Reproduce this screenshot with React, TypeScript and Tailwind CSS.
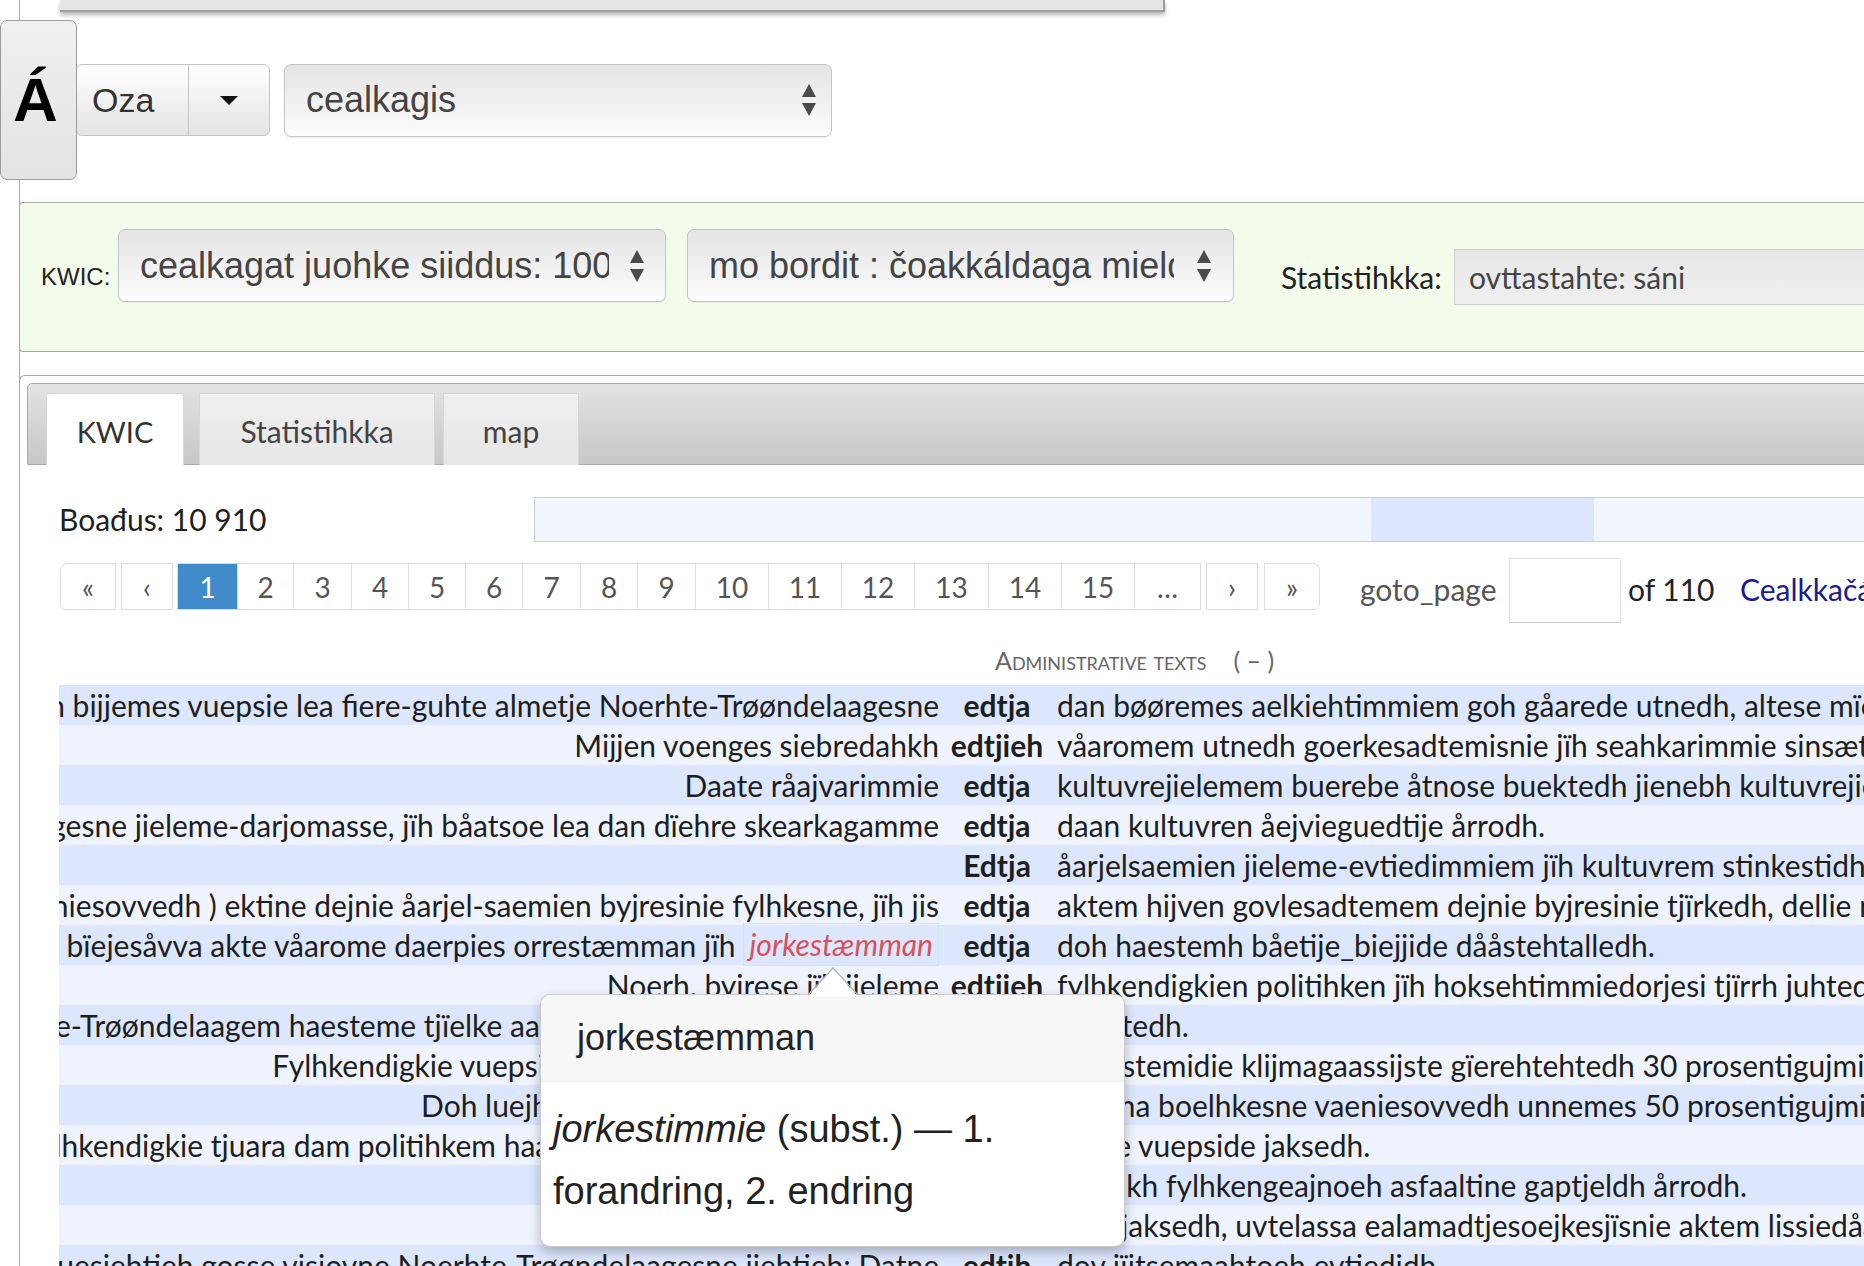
import React from "react";

type Row = { l: string; hl?: string; k: string; r: string };

const rows: Row[] = [
  {
    l: "Daate lea dan gaavhtan bijjemes vuepsie lea fiere-guhte almetje Noerhte-Trøøndelaagesne",
    k: "edtja",
    r: "dan bøøremes aelkiehtimmiem goh gåarede utnedh, altese mïelen mietie jïh eatnemen mietie",
  },
  {
    l: "Mijjen voenges siebredahkh",
    k: "edtjieh",
    r: "våaromem utnedh goerkesadtemisnie jïh seahkarimmie sinsætnan gaskem",
  },
  {
    l: "Daate råajvarimmie",
    k: "edtja",
    r: "kultuvrejielemem buerebe åtnose buektedh jienebh kultuvrejielemi mietie",
  },
  {
    l: "Noerhte-Trøøndelaagesne jieleme-darjomasse, jïh båatsoe lea dan dïehre skearkagamme",
    k: "edtja",
    r: "daan kultuvren åejvieguedtije årrodh.",
  },
  {
    l: "",
    k: "Edtja",
    r: "åarjelsaemien jieleme-evtiedimmiem jïh kultuvrem stinkestidh jïh eevtjedh",
  },
  {
    l: "Gosse mijjieh daejtie vaeniesovvedh ) ektine dejnie åarjel-saemien byjresinie fylhkesne, jïh jis",
    k: "edtja",
    r: "aktem hijven govlesadtemem dejnie byjresinie tjïrkedh, dellie mijjieh",
  },
  {
    l: "Daate sjïehtesjimmie bïejesåvva akte våarome daerpies orrestæmman jïh",
    hl: "jorkestæmman",
    k: "edtja",
    r: "doh haestemh båetije_biejjide dååstehtalledh.",
  },
  {
    l: "Noerh. byjrese jïh jieleme",
    k: "edtjieh",
    r: "fylhkendigkien politihken jïh hoksehtimmiedorjesi tjïrrh juhtedh.",
  },
  {
    l: "Fylhkendigkie sïjhtie Noerhte-Trøøndelaagem haesteme tjïelke aamhtesinie vuesiehtidh gåarede",
    k: "edtja",
    r: "buektedh.",
  },
  {
    l: "Fylhkendigkie vuepsiem bïejeme 2030 jaepien gïen",
    k: "edtja",
    r: "byjrestemidie klijmagaassijste gïerehtehtedh 30 prosentigujmie 1990 daltesistie",
  },
  {
    l: "Doh luejhtemh fylhkesne båetije jaepiej",
    k: "edtjieh",
    r: "daajma boelhkesne vaeniesovvedh unnemes 50 prosentigujmie",
  },
  {
    l: "Daate vuesehte Fylhkendigkie tjuara dam politihkem haarjanidh juktie fylhkesne jïh aaj",
    k: "edtja",
    r: "dejtie vuepside jaksedh.",
  },
  { l: "Gaajhkh", k: "edtjieh", r: "gaajhkh fylhkengeajnoeh asfaaltine gaptjeldh årrodh." },
  {
    l: "Mijjieh",
    k: "edtjebe",
    r: "dam jaksedh, uvtelassa ealamadtjesoejkesjïsnie aktem lissiedåarjoem",
  },
  {
    l: "Daate vuesiehtieh gosse visjovne Noerhte-Trøøndelaagesne jiehtieh: Datne",
    k: "edtjh",
    r: "dov jïjtsemaahtoeh evtiedidh.",
  },
];

const pages: { label: string; cls: string }[] = [
  { label: "1", cls: "w-[61px] border-l bg-[#428bca] border-[#428bca] text-white" },
  { label: "2", cls: "w-[56px]" },
  { label: "3", cls: "w-[58px]" },
  { label: "4", cls: "w-[57px]" },
  { label: "5", cls: "w-[57px]" },
  { label: "6", cls: "w-[57px]" },
  { label: "7", cls: "w-[58px]" },
  { label: "8", cls: "w-[57px]" },
  { label: "9", cls: "w-[58px]" },
  { label: "10", cls: "w-[73px]" },
  { label: "11", cls: "w-[73px]" },
  { label: "12", cls: "w-[73px]" },
  { label: "13", cls: "w-[74px]" },
  { label: "14", cls: "w-[73px]" },
  { label: "15", cls: "w-[73px]" },
  { label: "...", cls: "w-[66px]" },
];

const UpDown = () => (
  <svg width="14" height="32" viewBox="0 0 14 32" className="shrink-0">
    <polygon points="0,13 7,0 14,13" fill="#4a4a4a" />
    <polygon points="0,19 14,19 7,32" fill="#4a4a4a" />
  </svg>
);

const Select: React.FC<{ text: string; className: string; textW: string }> = ({
  text,
  className,
  textW,
}) => (
  <div
    className={`flex h-[73px] shrink-0 items-center rounded-[7px] border border-[#c5c5c5] bg-linear-to-b from-[#e4e4e4] to-[#fcfcfc] pl-[21px] font-['Liberation_Sans',Arial,sans-serif] text-[36px] text-[#444] shadow-[0_1px_1px_rgba(0,0,0,0.08)] ${className}`}
  >
    <span className={`overflow-hidden whitespace-nowrap ${textW}`}>{text}</span>
    <div className="flex flex-1 justify-center">
      <UpDown />
    </div>
  </div>
);

const pgBox = "flex h-[47px] shrink-0 items-center justify-center border border-[#dcdcdc]";

export default function App() {
  return (
    <div className="relative h-[1266px] w-[1864px] overflow-hidden bg-white font-['Lato',sans-serif] text-[#1e1e1e]">
      <div className="ml-[19px] h-full border-l border-[#a9a9a9]">
        {/* panel edge at top */}
        <div className="ml-[40px] h-[12px] w-[1105px] border-r-2 border-b-2 border-[#9c9c9c] bg-[#e5e5e5] shadow-[0_3px_4px_rgba(0,0,0,0.3)]" />

        {/* search row */}
        <div className="mt-[8px] flex h-[160px] items-center">
          <div className="relative -ml-[20px] flex h-[160px] w-[77px] shrink-0 items-center justify-center rounded-[7px] border border-[#9b9b9b] bg-linear-to-b from-[#f0f0f0] to-[#e3e3e3] pr-[6px] font-['Liberation_Sans',Arial,sans-serif] text-[62px] leading-none font-bold text-black">
            Á
          </div>
          <div className="-ml-px flex h-[72px] shrink-0 overflow-hidden rounded-[6px] border border-[#c4c4c4] bg-linear-to-b from-white to-[#e4e4e4] font-['Liberation_Sans',Arial,sans-serif] text-[34px] text-[#333]">
            <div className="flex w-[111px] items-center pl-[15px]">Oza</div>
            <div className="flex w-[81px] items-center justify-center border-l border-[#c4c4c4]">
              <svg width="18" height="9" viewBox="0 0 18 9">
                <polygon points="0,0 18,0 9,9" fill="#111" />
              </svg>
            </div>
          </div>
          <Select text="cealkagis" className="ml-[14px] w-[548px]" textW="w-[480px]" />
        </div>

        {/* KWIC / statistics options */}
        <div className="mt-[22px] -ml-px flex h-[150px] w-[1900px] items-center rounded-l-[4px] border-y border-l border-[#a9a9a9] bg-[#f3fbea] pl-[21px]">
          <div className="w-[77px] shrink-0 font-['Liberation_Sans',Arial,sans-serif] text-[24px] text-[#222]">
            KWIC:
          </div>
          <Select
            text="cealkagat juohke siiddus: 100"
            className="mb-[23px] w-[548px]"
            textW="w-[469px]"
          />
          <Select
            text="mo bordit : čoakkáldaga mielde"
            className="mb-[23px] ml-[21px] w-[547px]"
            textW="w-[465px]"
          />
          <div className="ml-[47px] w-[173px] shrink-0 text-[30px] text-[#222]">Statistihkka:</div>
          <div className="flex h-[56px] w-[600px] shrink-0 items-center border border-[#cfcfcf] bg-linear-to-b from-[#e8e8e8] to-[#efefef] pl-[14px] text-[30px] text-[#444]">
            ovttastahte: sáni
          </div>
        </div>

        {/* results */}
        <div className="mt-[23px] -ml-px w-[1900px] rounded-tl-[6px] border-t border-l border-[#a9a9a9] pt-[7px] pl-[7px]">
          <div className="flex h-[82px] items-end rounded-tl-[5px] border border-[#a9a9a9] bg-linear-to-b from-[#e3e3e3] to-[#c7c7c7] pl-[18px] text-[30px]">
            <div className="-mb-px flex h-[72px] w-[138px] items-center justify-center rounded-t-[3px] border border-b-0 border-[#d6d6d6] bg-white pt-[4px] text-[29px] text-[#333]">
              KWIC
            </div>
            <div className="-mb-px ml-[15px] flex h-[72px] w-[236px] items-center justify-center border border-b-0 border-[#d6d6d6] bg-linear-to-b from-[#efefef] to-[#e6e6e6] pt-[4px] text-[#444]">
              Statistihkka
            </div>
            <div className="-mb-px ml-[8px] flex h-[72px] w-[136px] items-center justify-center border border-b-0 border-[#d6d6d6] bg-linear-to-b from-[#efefef] to-[#e6e6e6] pt-[4px] text-[#444]">
              map
            </div>
          </div>

          <div className="pl-[32px]">
            <div className="mt-[32px] flex h-[45px] items-center">
              <div className="w-[475px] shrink-0 text-[30px] text-[#1e1e1e]">Boađus: 10 910</div>
              <div className="flex h-[45px] w-[1400px] shrink-0 border border-[#cdcdcd] bg-[#f0f5fe]">
                <div className="ml-[836px] h-full w-[223px] bg-[#dce6fd]" />
              </div>
            </div>

            {/* pagination */}
            <div className="mt-[21px] flex h-[47px] items-center text-[28px] text-[#555]">
              <div className={`ml-px w-[56px] rounded-l-[7px] ${pgBox}`}>«</div>
              <div className={`ml-[5px] w-[52px] ${pgBox}`}>‹</div>
              <div className="ml-[4px] flex shrink-0">
                {pages.map((p) => (
                  <div
                    key={p.label}
                    className={`flex h-[47px] shrink-0 items-center justify-center border-y border-r border-[#dcdcdc] ${p.cls}`}
                  >
                    {p.label === "..." ? "…" : p.label}
                  </div>
                ))}
              </div>
              <div className={`ml-[5px] w-[52px] ${pgBox}`}>›</div>
              <div className={`ml-[6px] w-[56px] rounded-r-[7px] ${pgBox}`}>»</div>
              <div className="ml-[40px] w-[149px] shrink-0 pt-[6px] text-[30px] text-[#555]">goto_page</div>
              <div className="mt-[8px] h-[65px] w-[112px] shrink-0 border border-[#e2e2e2] border-b-[#cfcfcf] bg-white" />
              <div className="ml-[7px] w-[112px] shrink-0 pt-[6px] text-[30px] text-[#222]">of 110</div>
              <div className="shrink-0 pt-[6px] text-[30px] whitespace-nowrap text-[#1c1c8f]">
                Cealkkačájeheaddji
              </div>
            </div>

            <div className="mt-[35px] ml-[936px] flex h-[30px] items-center text-[25px] leading-[30px] text-[#666]">
              <span className="[font-variant:small-caps]">Administrative texts</span>
              <span className="ml-[27px]">( – )</span>
            </div>

            {/* KWIC lines */}
            <div className="mt-[10px] text-[30px]">
              {rows.map((row, i) => (
                <div
                  key={i}
                  className={`flex h-[40px] leading-[40px] ${i % 2 === 0 ? "bg-[#dce6fd]" : "bg-[#eef3fe]"}`}
                >
                  <div className="flex w-[880px] shrink-0 justify-end overflow-x-clip whitespace-nowrap">
                    <span className="shrink-0">{row.l}</span>
                    {row.hl && (
                      <span className="relative z-10 -mt-[2px] ml-[8px] h-[43px] shrink-0 border border-[#c8ebe4] px-[5px] leading-[41px] text-[#d6525c] italic">
                        {row.hl}
                      </span>
                    )}
                  </div>
                  <div className="w-[116px] shrink-0 text-center font-bold">{row.k}</div>
                  <div className="shrink-0 pl-[2px] whitespace-nowrap">{row.r}</div>
                </div>
              ))}
            </div>
          </div>
        </div>
      </div>

      {/* word popover */}
      <div className="absolute top-[994px] left-[540px] h-[253px] w-[585px] rounded-[10px] border border-black/20 bg-white font-['Liberation_Sans',Arial,sans-serif] text-[#222] shadow-[0_5px_12px_rgba(0,0,0,0.25)]">
        <svg
          className="absolute -top-[28px] left-[267px]"
          width="50"
          height="30"
          viewBox="0 0 50 30"
        >
          <polygon points="0,30 25,1 50,30" fill="#ffffff" />
          <polyline points="0,28 25,1 50,28" fill="none" stroke="#b4b4b4" strokeWidth="1.2" />
        </svg>
        <div className="flex h-[87px] items-center rounded-t-[10px] border-b border-[#ebebeb] bg-[#f7f7f7] pl-[36px] text-[36px]">
          jorkestæmman
        </div>
        <div className="pt-[16px] pl-[12px] text-[38px] leading-[62px]">
          <i>jorkestimmie</i> (subst.) — 1.
          <br />
          forandring, 2. endring
        </div>
      </div>
    </div>
  );
}
